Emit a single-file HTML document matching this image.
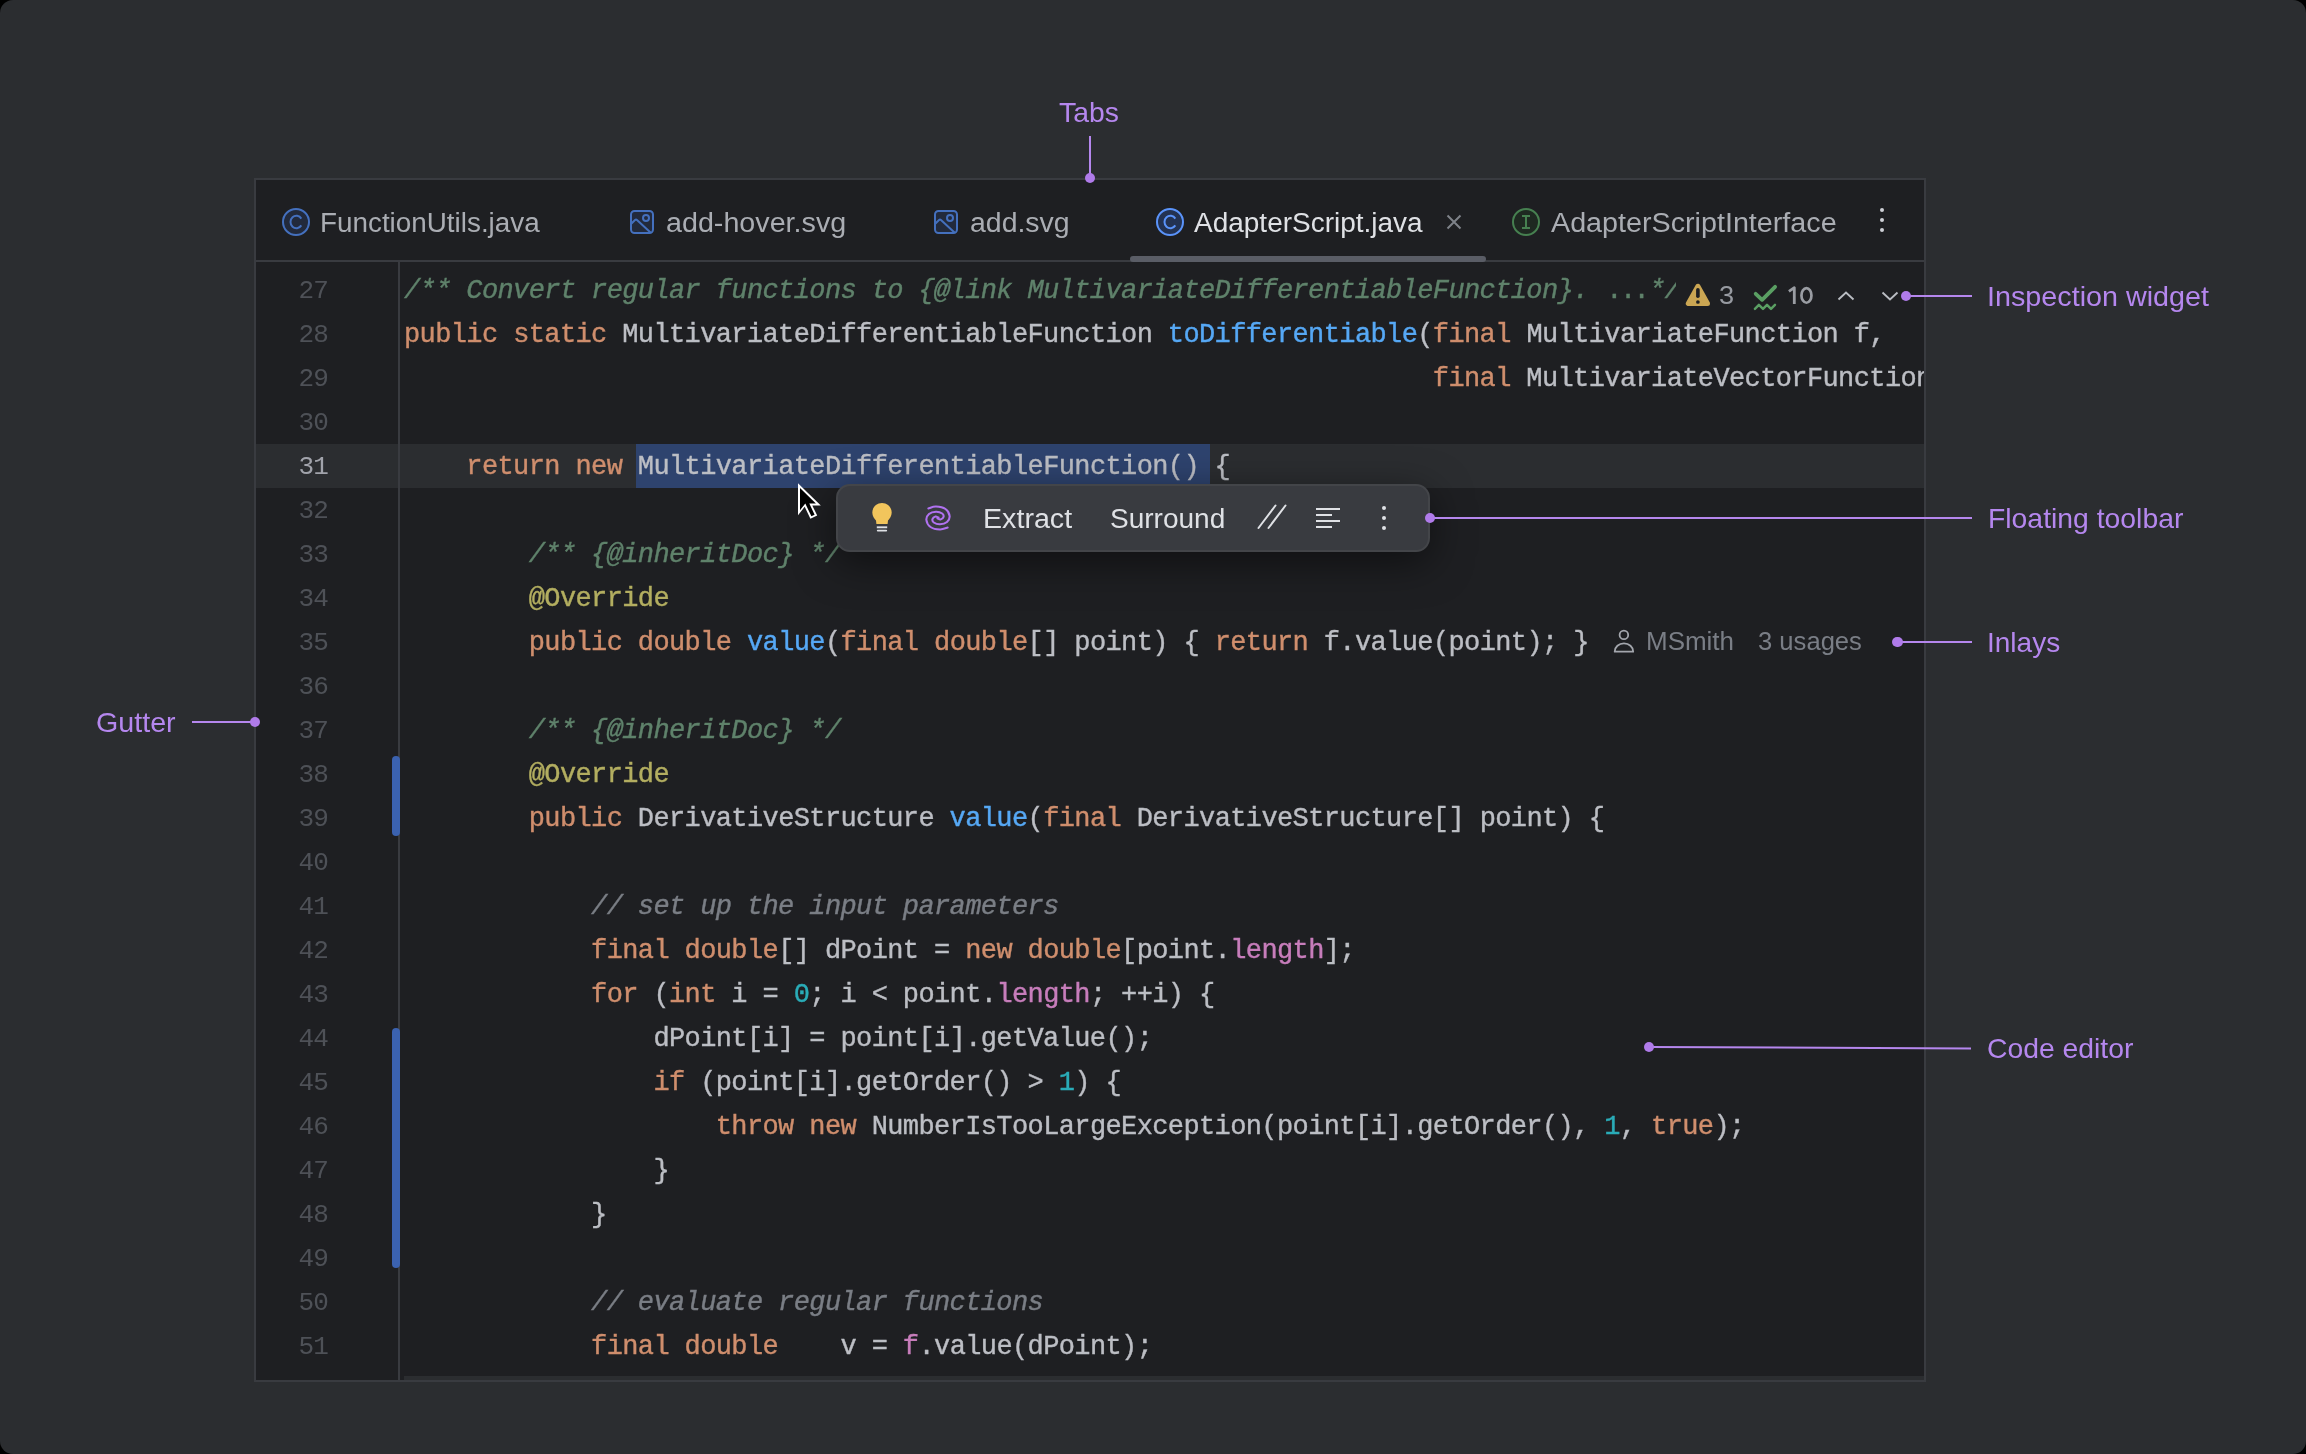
<!DOCTYPE html><html><head><meta charset="utf-8"><title>Editor</title><style>
html,body{margin:0;padding:0}
body{width:2306px;height:1454px;background:#000;overflow:hidden;position:relative;font-family:"Liberation Sans",sans-serif}
.frame{position:absolute;left:0;top:0;width:2306px;height:1454px;background:#2B2D30;border-radius:13px;overflow:hidden}
.a{position:absolute}
.t{position:absolute;white-space:nowrap;transform-origin:0 0;line-height:1;will-change:transform}
.ed{position:absolute;left:254px;top:178px;width:1672px;height:1204px;box-sizing:border-box;border:2px solid #393B40;background:#1E1F22}
.clip{position:absolute;left:256px;top:262px;width:1668px;height:1118px;overflow:hidden}
.row{position:absolute;will-change:transform;left:147.9px;-webkit-text-stroke-width:0.4px;height:44px;line-height:44px;font-family:"Liberation Mono",monospace;font-size:27px;letter-spacing:-0.6146px;white-space:pre;color:#BCBEC4}
.ln{position:absolute;will-change:transform;left:0;width:72px;text-align:right;height:44px;line-height:45px;font-family:"Liberation Mono",monospace;font-size:26px;letter-spacing:-0.8px;color:#4E5157;white-space:pre}
.it{font-style:italic}
svg{position:absolute;overflow:visible}
</style></head><body><div class="frame">
<div class="ed"></div>
<div class="a" style="left:256px;top:260px;width:1668px;height:2px;background:#393B40"></div>
<div class="clip">
<div class="a" style="left:0;top:182px;width:1668px;height:44px;background:#2B2D30"></div>
<div class="a" style="left:380px;top:182px;width:574px;height:44px;background:#2E436E"></div>
<div class="a" style="left:142px;top:0;width:2px;height:1118px;background:#393B40"></div>
<div class="a" style="left:136px;top:494px;width:8px;height:80px;border-radius:4px;background:#3B62B0"></div>
<div class="a" style="left:136px;top:766px;width:8px;height:240px;border-radius:4px;background:#3B62B0"></div>
<div class="a" style="left:148px;top:1114px;width:1520px;height:4px;background:#2B2D30"></div>
<div class="ln" style="top:7px;color:#4E5157">27</div>
<div class="row" id="row27" style="top:7px"><span class="it" style="color:#5F826B">/** Convert regular functions to {@link MultivariateDifferentiableFunction}. </span><span class="it" style="color:#5F826B;letter-spacing:-2.6px;margin-left:2px;margin-right:1.8px;font-style:normal">...</span><span class="it" style="color:#5F826B">*/</span></div>
<div class="ln" style="top:51px;color:#4E5157">28</div>
<div class="row" id="row28" style="top:51px"><span style="color:#CF8E6D">public</span> <span style="color:#CF8E6D">static</span> MultivariateDifferentiableFunction <span style="color:#56A8F5">toDifferentiable</span>(<span style="color:#CF8E6D">final</span> MultivariateFunction f,</div>
<div class="ln" style="top:95px;color:#4E5157">29</div>
<div class="row" id="row29" style="top:95px">                                                                  <span style="color:#CF8E6D">final</span> MultivariateVectorFunction</div>
<div class="ln" style="top:139px;color:#4E5157">30</div>
<div class="ln" style="top:183px;color:#A1A3AB">31</div>
<div class="row" id="row31" style="top:183px">    <span style="color:#CF8E6D">return</span> <span style="color:#CF8E6D">new</span> MultivariateDifferentiableFunction() {</div>
<div class="ln" style="top:227px;color:#4E5157">32</div>
<div class="ln" style="top:271px;color:#4E5157">33</div>
<div class="row" id="row33" style="top:271px">        <span class="it" style="color:#5F826B">/** {@inheritDoc} */</span></div>
<div class="ln" style="top:315px;color:#4E5157">34</div>
<div class="row" id="row34" style="top:315px">        <span style="color:#B3AE60">@Override</span></div>
<div class="ln" style="top:359px;color:#4E5157">35</div>
<div class="row" id="row35" style="top:359px">        <span style="color:#CF8E6D">public</span> <span style="color:#CF8E6D">double</span> <span style="color:#56A8F5">value</span>(<span style="color:#CF8E6D">final</span> <span style="color:#CF8E6D">double</span>[] point) { <span style="color:#CF8E6D">return</span> f.value(point); }</div>
<div class="ln" style="top:403px;color:#4E5157">36</div>
<div class="ln" style="top:447px;color:#4E5157">37</div>
<div class="row" id="row37" style="top:447px">        <span class="it" style="color:#5F826B">/** {@inheritDoc} */</span></div>
<div class="ln" style="top:491px;color:#4E5157">38</div>
<div class="row" id="row38" style="top:491px">        <span style="color:#B3AE60">@Override</span></div>
<div class="ln" style="top:535px;color:#4E5157">39</div>
<div class="row" id="row39" style="top:535px">        <span style="color:#CF8E6D">public</span> DerivativeStructure <span style="color:#56A8F5">value</span>(<span style="color:#CF8E6D">final</span> DerivativeStructure[] point) {</div>
<div class="ln" style="top:579px;color:#4E5157">40</div>
<div class="ln" style="top:623px;color:#4E5157">41</div>
<div class="row" id="row41" style="top:623px">            <span class="it" style="color:#7A7E85">// set up the input parameters</span></div>
<div class="ln" style="top:667px;color:#4E5157">42</div>
<div class="row" id="row42" style="top:667px">            <span style="color:#CF8E6D">final</span> <span style="color:#CF8E6D">double</span>[] dPoint = <span style="color:#CF8E6D">new</span> <span style="color:#CF8E6D">double</span>[point.<span style="color:#C77DBB">length</span>];</div>
<div class="ln" style="top:711px;color:#4E5157">43</div>
<div class="row" id="row43" style="top:711px">            <span style="color:#CF8E6D">for</span> (<span style="color:#CF8E6D">int</span> i = <span style="color:#2AACB8">0</span>; i &lt; point.<span style="color:#C77DBB">length</span>; ++i) {</div>
<div class="ln" style="top:755px;color:#4E5157">44</div>
<div class="row" id="row44" style="top:755px">                dPoint[i] = point[i].getValue();</div>
<div class="ln" style="top:799px;color:#4E5157">45</div>
<div class="row" id="row45" style="top:799px">                <span style="color:#CF8E6D">if</span> (point[i].getOrder() &gt; <span style="color:#2AACB8">1</span>) {</div>
<div class="ln" style="top:843px;color:#4E5157">46</div>
<div class="row" id="row46" style="top:843px">                    <span style="color:#CF8E6D">throw</span> <span style="color:#CF8E6D">new</span> NumberIsTooLargeException(point[i].getOrder(), <span style="color:#2AACB8">1</span>, <span style="color:#CF8E6D">true</span>);</div>
<div class="ln" style="top:887px;color:#4E5157">47</div>
<div class="row" id="row47" style="top:887px">                }</div>
<div class="ln" style="top:931px;color:#4E5157">48</div>
<div class="row" id="row48" style="top:931px">            }</div>
<div class="ln" style="top:975px;color:#4E5157">49</div>
<div class="ln" style="top:1019px;color:#4E5157">50</div>
<div class="row" id="row50" style="top:1019px">            <span class="it" style="color:#7A7E85">// evaluate regular functions</span></div>
<div class="ln" style="top:1063px;color:#4E5157">51</div>
<div class="row" id="row51" style="top:1063px">            <span style="color:#CF8E6D">final</span> <span style="color:#CF8E6D">double</span>    v = <span style="color:#C77DBB">f</span>.value(dPoint);</div>
</div>
<svg style="left:0;top:0" width="2306" height="1454"><circle cx="296" cy="222" r="13" fill="#222A3C" stroke="#4470BE" stroke-width="2"/><path d="M301.33 218.60 A5.9 6.2 0 1 0 301.33 225.40" fill="none" stroke="#4470BE" stroke-width="2"/></svg>
<div class="t" id="tab1" style="left:319.52px;top:210.14px;font-size:27px;color:#AAADB3;transform:scaleX(1.0309);">FunctionUtils.java</div>
<svg style="left:630px;top:210px" width="26" height="26" viewBox="0 0 26 26"><rect x="1" y="1" width="22" height="22" rx="3.5" fill="#222A3C" stroke="#4470BE" stroke-width="2"/><circle cx="16" cy="8" r="3" fill="none" stroke="#4470BE" stroke-width="2"/><path d="M1.5 13.5 L5 10 Q6 9.2 7 10 L20.5 22.5" fill="none" stroke="#4470BE" stroke-width="2"/></svg>
<div class="t" id="tab2" style="left:665.76px;top:210.14px;font-size:27px;color:#AAADB3;transform:scaleX(1.0624);">add-hover.svg</div>
<svg style="left:934px;top:210px" width="26" height="26" viewBox="0 0 26 26"><rect x="1" y="1" width="22" height="22" rx="3.5" fill="#222A3C" stroke="#4470BE" stroke-width="2"/><circle cx="16" cy="8" r="3" fill="none" stroke="#4470BE" stroke-width="2"/><path d="M1.5 13.5 L5 10 Q6 9.2 7 10 L20.5 22.5" fill="none" stroke="#4470BE" stroke-width="2"/></svg>
<div class="t" id="tab3" style="left:969.55px;top:210.14px;font-size:27px;color:#AAADB3;transform:scaleX(1.0536);">add.svg</div>
<svg style="left:0;top:0" width="2306" height="1454"><circle cx="1170" cy="222" r="13" fill="#233252" stroke="#5A93FA" stroke-width="2"/><path d="M1175.33 218.60 A5.9 6.2 0 1 0 1175.33 225.40" fill="none" stroke="#5A93FA" stroke-width="2"/></svg>
<div class="t" id="tab4" style="left:1194.36px;top:210.14px;font-size:27px;color:#DFE1E5;transform:scaleX(1.0365);">AdapterScript.java</div>
<svg style="left:1447px;top:215px" width="14" height="14" viewBox="0 0 14 14"><path d="M0.5 0.5 L13.5 13.5 M13.5 0.5 L0.5 13.5" stroke="#7E8289" stroke-width="2"/></svg>
<svg style="left:1512px;top:208px" width="28" height="28" viewBox="0 0 28 28"><circle cx="14" cy="14" r="13" fill="#1E2921" stroke="#468050" stroke-width="2"/><path d="M10 8 H18 M10 20 H18 M14 8 V20" stroke="#468050" stroke-width="2"/></svg>
<div class="t" id="tab5" style="left:1550.72px;top:210.14px;font-size:27px;color:#AAADB3;transform:scaleX(1.0631);">AdapterScriptInterface</div>
<div class="a" style="left:1879.7px;top:207.7px;width:4.6px;height:4.6px;border-radius:50%;background:#CED0D6"></div>
<div class="a" style="left:1879.7px;top:217.7px;width:4.6px;height:4.6px;border-radius:50%;background:#CED0D6"></div>
<div class="a" style="left:1879.7px;top:227.7px;width:4.6px;height:4.6px;border-radius:50%;background:#CED0D6"></div>
<div class="a" style="left:1130px;top:256px;width:356px;height:6px;border-radius:3px;background:#5A5D66"></div>
<div class="a" style="left:1676px;top:270px;width:240px;height:40px;background:#1E1F22"></div>
<svg style="left:1685px;top:283px" width="26" height="24" viewBox="0 0 26 24"><path d="M12.9 3.3 L3.3 20.5 L22.5 20.5 Z" fill="#CBA653" stroke="#CBA653" stroke-width="5" stroke-linejoin="round"/><path d="M12.9 6.8 V13.3" stroke="#1E1F22" stroke-width="3.6" stroke-linecap="round"/><circle cx="12.9" cy="19" r="1.85" fill="#1E1F22"/></svg>
<div class="t" id="ins3" style="left:1718.66px;top:281.99px;font-size:26px;color:#979AA1;transform:scaleX(1.0445);">3</div>
<svg style="left:1752px;top:283px" width="28" height="30" viewBox="0 0 28 30"><path d="M3.7 10.8 L10.1 16.8 L23.1 3.8" fill="none" stroke="#5A9F63" stroke-width="3.8" stroke-linecap="round" stroke-linejoin="round"/><path d="M2.9 25.9 L6.9 21.8 L11 25.9 L15 21.8 L19 25.9 L23 21.8" fill="none" stroke="#5A9F63" stroke-width="2.4" stroke-linecap="round" stroke-linejoin="round"/></svg>
<svg style="left:0;top:0" width="2306" height="1454"><path d="M1788.9 291.3 L1794.3 287.7 V303.9" fill="none" stroke="#9A9DA3" stroke-width="2.8" stroke-linejoin="round"/><ellipse cx="1806.45" cy="295.45" rx="5.0" ry="7.3" fill="none" stroke="#9A9DA3" stroke-width="2.7"/></svg>
<svg style="left:1836px;top:289px" width="20" height="14" viewBox="0 0 20 14"><path d="M2.5 10.5 L10 3.5 L17.5 10.5" fill="none" stroke="#B9BCC2" stroke-width="1.9"/></svg>
<svg style="left:1880px;top:289px" width="20" height="14" viewBox="0 0 20 14"><path d="M2.5 3.5 L10 10.5 L17.5 3.5" fill="none" stroke="#B9BCC2" stroke-width="1.9"/></svg>
<svg style="left:1612px;top:629px" width="24" height="24" viewBox="0 0 24 24"><circle cx="11.9" cy="5.9" r="4.3" fill="none" stroke="#A3A6AD" stroke-width="1.8"/><path d="M2.7 22.7 A9.25 8.4 0 0 1 21.2 22.7 Z" fill="none" stroke="#A3A6AD" stroke-width="1.8" stroke-linejoin="round"/></svg>
<div class="t" id="inl1" style="left:1645.93px;top:629.33px;font-size:25px;color:#7A7E86;transform:scaleX(1.0387);">MSmith</div>
<div class="t" id="inl2" style="left:1758.29px;top:629.33px;font-size:25px;color:#7A7E86;transform:scaleX(1.0240);">3 usages</div>
<div class="a" style="left:836px;top:484px;width:594px;height:68px;box-sizing:border-box;border-radius:14px;background:#393B40;border:2px solid #434549;box-shadow:0 10px 40px rgba(0,0,0,0.5)"></div>
<svg style="left:868px;top:500px" width="28" height="36" viewBox="0 0 28 36"><path d="M14 3 C8.3 3 4.3 7.3 4.3 12.6 C4.3 16.3 6.4 18.8 8 20.6 L8.4 24 H19.6 L20 20.6 C21.6 18.8 23.7 16.3 23.7 12.6 C23.7 7.3 19.7 3 14 3Z" fill="#F2C55C"/><path d="M8.8 27.3 H19.2" stroke="#DFE1E5" stroke-width="1.9"/><path d="M9.8 30.6 H18.2" stroke="#DFE1E5" stroke-width="1.9" stroke-linecap="round"/></svg>
<svg style="left:920px;top:500px" width="36" height="36" viewBox="0 0 36 36"><path d="M8.40 8.40 C9.67 8.08 13.15 6.40 16.00 6.50 C18.85 6.60 23.23 7.42 25.50 9.00 C27.77 10.58 29.35 13.83 29.60 16.00 C29.85 18.17 28.60 20.62 27.00 22.00 C25.40 23.38 22.20 24.22 20.00 24.30 C17.80 24.38 15.05 23.38 13.80 22.50 C12.55 21.62 12.22 20.00 12.50 19.00 C12.78 18.00 14.50 16.73 15.50 16.50 C16.50 16.27 18.00 17.42 18.50 17.60 M27.60 27.60 C26.33 27.92 22.85 29.60 20.00 29.50 C17.15 29.40 12.77 28.58 10.50 27.00 C8.23 25.42 6.65 22.17 6.40 20.00 C6.15 17.83 7.40 15.38 9.00 14.00 C10.60 12.62 13.80 11.78 16.00 11.70 C18.20 11.62 20.95 12.62 22.20 13.50 C23.45 14.38 23.78 16.00 23.50 17.00 C23.22 18.00 21.50 19.27 20.50 19.50 C19.50 19.73 18.00 18.58 17.50 18.40" fill="none" stroke="#B072F0" stroke-width="2.1" stroke-linecap="round"/></svg>
<div class="t" id="tb1" style="left:982.84px;top:506.34px;font-size:27px;color:#DFE1E5;transform:scaleX(1.0610);">Extract</div>
<div class="t" id="tb2" style="left:1109.68px;top:506.34px;font-size:27px;color:#DFE1E5;transform:scaleX(1.0377);">Surround</div>
<svg style="left:0;top:0" width="2306" height="1454"><path d="M1258.5 528 L1275.5 505.5 M1268.5 528 L1285.5 505.5" fill="none" stroke="#DFE1E5" stroke-width="2" stroke-linecap="round"/></svg>
<svg style="left:1315px;top:507px" width="28" height="22" viewBox="0 0 28 22"><path d="M1 2 H25 M1 8 H17 M1 14 H25 M1 20 H17" fill="none" stroke="#DFE1E5" stroke-width="2.2"/></svg>
<div class="a" style="left:1381.7px;top:505.7px;width:4.6px;height:4.6px;border-radius:50%;background:#DFE1E5"></div>
<div class="a" style="left:1381.7px;top:515.7px;width:4.6px;height:4.6px;border-radius:50%;background:#DFE1E5"></div>
<div class="a" style="left:1381.7px;top:525.7px;width:4.6px;height:4.6px;border-radius:50%;background:#DFE1E5"></div>
<svg style="left:0;top:0" width="2306" height="1454"><path d="M798 483.2 L798 515.2 L804.7 506.8 L810.4 518.8 L817.2 515.6 L812.3 505.5 L820.8 505.5 Z" fill="#fff"/><path d="M800 488 L800 510.2 L805.3 503.6 L811.4 516.2 L814.6 514.7 L809.3 503.5 L815.9 503.5 Z" fill="#000"/></svg>
<div class="t" id="lblTabs" style="left:1059.27px;top:98.69px;font-size:28px;color:#B587EE;transform:scaleX(1.0116);">Tabs</div>
<div class="a" style="left:1089px;top:136px;width:2px;height:42px;background:#B587EE"></div>
<div class="a" style="left:1084.6px;top:172.6px;width:10.8px;height:10.8px;border-radius:50%;background:#B07BEA"></div>
<div class="t" id="lblInsp" style="left:1987.25px;top:282.59px;font-size:28px;color:#B587EE;transform:scaleX(1.0262);">Inspection widget</div>
<div class="a" style="left:1906.0px;top:295.0px;width:66.0px;height:2px;background:#B587EE"></div>
<div class="a" style="left:1900.6px;top:290.6px;width:10.8px;height:10.8px;border-radius:50%;background:#B07BEA"></div>
<div class="t" id="lblFloat" style="left:1987.73px;top:505.49px;font-size:28px;color:#B587EE;transform:scaleX(1.0121);">Floating toolbar</div>
<div class="a" style="left:1430.0px;top:517.0px;width:542.0px;height:2px;background:#B587EE"></div>
<div class="a" style="left:1424.6px;top:512.6px;width:10.8px;height:10.8px;border-radius:50%;background:#B07BEA"></div>
<div class="t" id="lblInlays" style="left:1987.28px;top:629.29px;font-size:28px;color:#B587EE;transform:scaleX(0.9933);">Inlays</div>
<div class="a" style="left:1897.5px;top:641.0px;width:74.0px;height:2px;background:#B587EE"></div>
<div class="a" style="left:1892.1px;top:636.6px;width:10.8px;height:10.8px;border-radius:50%;background:#B07BEA"></div>
<div class="t" id="lblCode" style="left:1986.92px;top:1035.49px;font-size:28px;color:#B587EE;transform:scaleX(1.0115);">Code editor</div>
<svg style="left:0;top:0" width="2306" height="1454"><line x1="1649" y1="1047" x2="1971" y2="1048.4" stroke="#B587EE" stroke-width="2"/></svg>
<div class="a" style="left:1643.6px;top:1041.6px;width:10.8px;height:10.8px;border-radius:50%;background:#B07BEA"></div>
<div class="t" id="lblGutter" style="left:95.81px;top:708.59px;font-size:28px;color:#B587EE;transform:scaleX(1.0238);">Gutter</div>
<div class="a" style="left:192.0px;top:721.0px;width:63.0px;height:2px;background:#B587EE"></div>
<div class="a" style="left:249.6px;top:716.6px;width:10.8px;height:10.8px;border-radius:50%;background:#B07BEA"></div>
</div></body></html>
